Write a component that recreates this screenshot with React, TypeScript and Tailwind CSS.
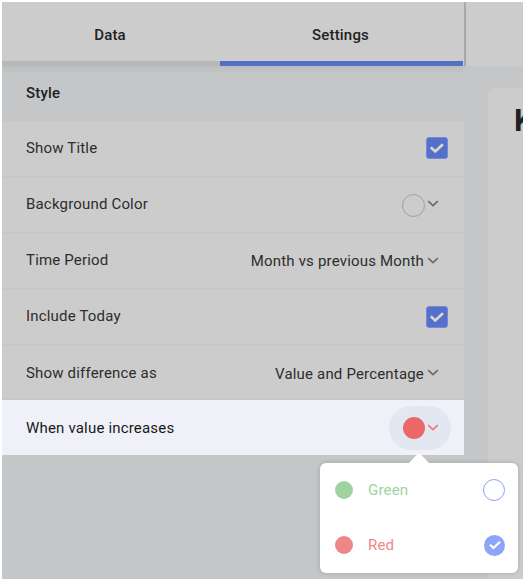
import type { ReactNode } from "react";

function Chevron({ color = "#696969", className = "ml-[3px]" }: { color?: string; className?: string }) {
  return (
    <svg className={`block shrink-0 ${className}`} width="12" height="8" viewBox="0 0 12 8" fill="none">
      <path d="M1.2 1.2 6 5.7 10.8 1.2" stroke={color} strokeWidth="1.6" />
    </svg>
  );
}

function Checkbox({ className = "" }: { className?: string }) {
  return (
    <span className={`mr-4 flex size-[22px] items-center justify-center rounded-[3px] border border-[#738bd5] bg-[#556fcb] ${className}`}>
      <svg width="16" height="12" viewBox="0 0 16 12" fill="none">
        <path d="M1.8 5.2 6.2 9.4 14 2.2" stroke="#d8d8d3" strokeWidth="2.7" />
      </svg>
    </span>
  );
}

function Row({ label, children, height = "h-14" }: { label: string; children: ReactNode; height?: string }) {
  return (
    <div className={`flex ${height} items-center justify-between border-b border-[#c6c6c6] bg-[#cccccc] pl-6 text-[#2d2d2d]`}>
      <span className="pb-0.5">{label}</span>
      {children}
    </div>
  );
}

function Option({ name, dot, text, selected }: { name: string; dot: string; text: string; selected?: boolean }) {
  return (
    <div className="flex h-[55px] items-center pl-[15px] pr-[13px]">
      <span className={`size-[18px] rounded-full ${dot}`} />
      <span className={`ml-[15px] ${text}`}>{name}</span>
      {selected ? (
        <span className="ml-auto flex size-[21px] items-center justify-center rounded-full bg-[#8ba5f7]">
          <svg width="14" height="10" viewBox="0 0 14 10" fill="none">
            <path d="M2 4.8 5.4 8 12 1.8" stroke="white" strokeWidth="2.2" />
          </svg>
        </span>
      ) : (
        <span className="ml-auto size-[22px] rounded-full border border-[#8ba5f0] bg-white" />
      )}
    </div>
  );
}

export default function App() {
  return (
    <div className="flex h-[579px] w-[523px] overflow-hidden border-l-2 border-t-2 border-white bg-[#c5c6c8] font-['Roboto',sans-serif] text-[15px] leading-5 tracking-[0.18px]">
      <section className="w-[462px] shrink-0">
        <nav className="relative flex h-16 bg-[#cccccc] font-medium text-[#222222] shadow-[0_3px_7px_rgba(0,0,0,0.06)]">
          <div className="flex w-[218px] items-center justify-center border-b-[5px] border-[#b7b9b8] pr-0.5 pt-[7px]">Data</div>
          <div className="mr-px flex flex-1 items-center justify-center border-b-[5px] border-[#556fc9] pr-0.5 pt-[7px]">Settings</div>
        </nav>
        <h2 className="flex h-[55px] items-center pb-0.5 pl-6 font-medium text-[#222222]">Style</h2>
        <Row label="Show Title"><Checkbox className="mb-0.5" /></Row>
        <Row label="Background Color">
          <span className="mr-[25px] flex items-center">
            <span className="mt-px size-[23px] rounded-full border-[1.5px] border-[#a0a0a0]" />
            <Chevron className="mb-0.5 ml-0.5" />
          </span>
        </Row>
        <Row label="Time Period">
          <span className="mr-[25px] flex items-center"><span className="pt-px">Month vs previous Month</span><Chevron /></span>
        </Row>
        <Row label="Include Today"><Checkbox /></Row>
        <Row label="Show difference as" height="h-[55px] pt-[3px]">
          <span className="mr-[25px] flex items-center"><span>Value and Percentage</span><Chevron className="mb-0.5 ml-[3px]" /></span>
        </Row>
        <div className="flex h-[55px] items-center justify-between bg-[#f0f1f8] pl-6 text-[#181818]">
          <span>When value increases</span>
          <div className="relative mr-[13px] flex h-11 w-[62px] items-center rounded-full bg-[#e3e7f2] pl-[14px]">
            <span className="size-[22px] rounded-full bg-[#ec6769]" />
            <Chevron color="#ec7779" className="ml-0.5" />
            <div className="absolute left-[-69px] top-[57px] z-10 h-[110px] w-[198px] rounded-[6px] bg-white shadow-[0_0_5px_rgba(0,0,0,0.18)]">
              <svg className="absolute left-[88px] top-[-10px]" width="22" height="11" viewBox="0 0 22 11">
                <path d="M0 11 9.4 1.2Q11 0 12.6 1.2L22 11Z" fill="white" />
              </svg>
              <Option name="Green" dot="bg-[#9fd3a2]" text="text-[#9fd3a2]" />
              <Option name="Red" dot="bg-[#ed8789]" text="text-[#ed8789]" selected />
            </div>
          </div>
        </div>
      </section>
      <main className="flex w-[59px] shrink-0 flex-col">
        <div className="h-16 border-l-2 border-[#acacac] bg-[#cccccc]" />
        <div className="ml-6 mt-[22px] flex-1 overflow-hidden rounded-tl-[7px] bg-[#cccccc] pl-[26px] pt-[15px] text-[31px] font-bold leading-9 text-[#202020]">K</div>
      </main>
    </div>
  );
}
